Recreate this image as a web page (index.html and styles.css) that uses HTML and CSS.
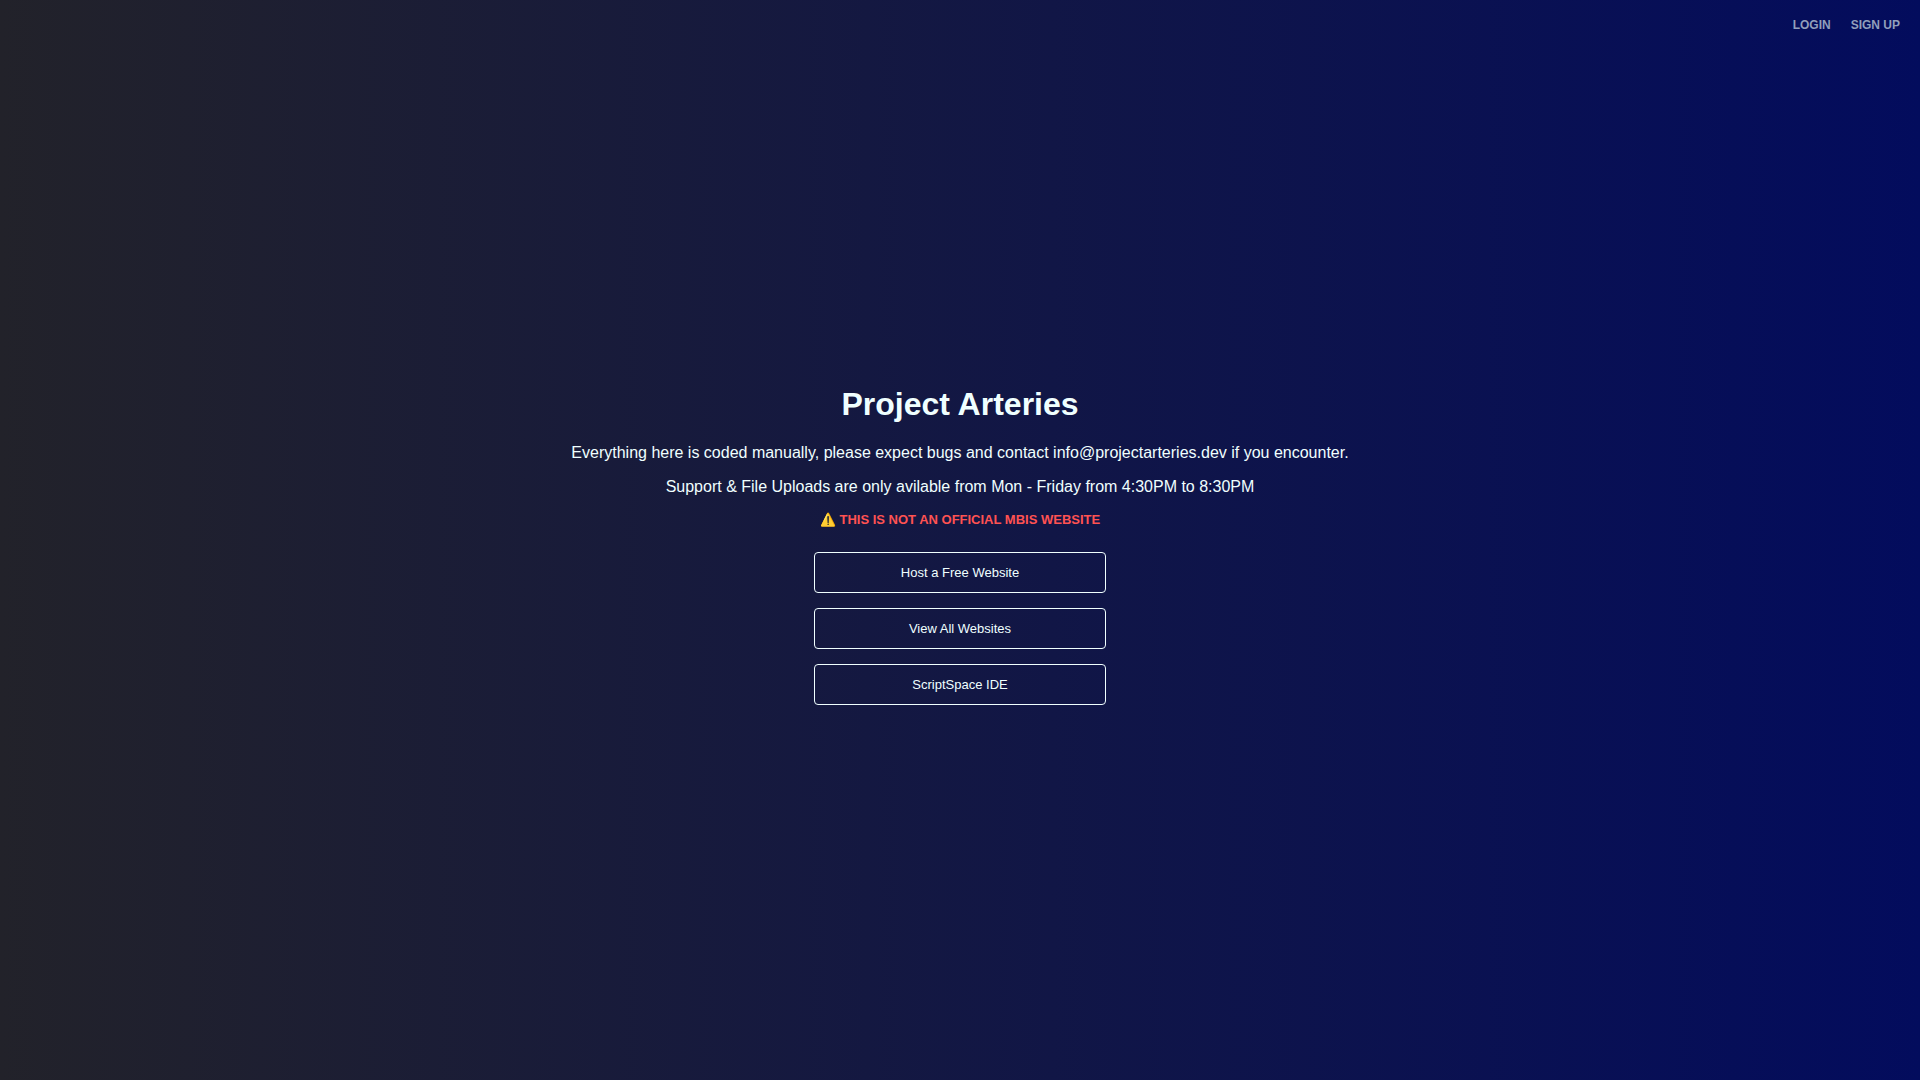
FILE: index.html
```
<!DOCTYPE html>
<html lang="en">
<head>
    <meta charset="UTF-8">
    <meta name="viewport" content="width=device-width, initial-scale=1.0">
    <title>Project Arteries</title>
    <link rel="stylesheet" href="styles.css">
</head>
<body>
    <nav class="navbar">
        <a href="#">LOGIN</a>
        <a href="#">SIGN UP</a>
    </nav>

    <main class="container">
        <h1>Project Arteries</h1>
        <p>Everything here is coded manually, please expect bugs and contact info@projectarteries.dev if you encounter.</p>
        <p>Support &amp; File Uploads are only avilable from Mon - Friday from 4:30PM to 8:30PM</p>
        <p class="warning">⚠️ THIS IS NOT AN OFFICIAL MBIS WEBSITE</p>

        <div class="buttons">
            <button type="button">Host a Free Website</button>
            <button type="button">View All Websites</button>
            <button type="button">ScriptSpace IDE</button>
        </div>
    </main>
</body>
</html>
```
FILE: styles.css
```
* {
    box-sizing: border-box;
    margin: 0;
    padding: 0;
}

body {
    min-height: 100vh;
    display: flex;
    flex-direction: column;
    justify-content: center;
    font-family: "Liberation Sans", Arial, sans-serif;
    color: azure;
    background: linear-gradient(to right, #22222a, #030c5d);
}

.navbar {
    position: absolute;
    top: 0;
    right: 0;
    display: flex;
    gap: 20px;
    padding: 18px 20px;
}

.navbar a {
    font-size: 12px;
    line-height: 14px;
    font-weight: bold;
    color: #919fbb;
    text-decoration: none;
}

.container {
    display: flex;
    flex-direction: column;
    align-items: center;
    padding: 10px 20px 0;
    text-align: center;
}

h1 {
    font-size: 32px;
    line-height: 36px;
    margin-bottom: 22px;
}

p {
    font-size: 16px;
    line-height: 18px;
    margin-bottom: 16px;
}

.warning {
    font-size: 13px;
    line-height: 16px;
    font-weight: bold;
    color: #ff5252;
    margin-bottom: 24px;
}

.buttons {
    display: flex;
    flex-direction: column;
    gap: 15px;
    width: 292px;
    max-width: 100%;
}

button {
    padding: 12px;
    font-family: inherit;
    font-size: 13px;
    line-height: 15px;
    color: azure;
    background: transparent;
    border: 1px solid azure;
    border-radius: 4px;
    cursor: pointer;
}
```
